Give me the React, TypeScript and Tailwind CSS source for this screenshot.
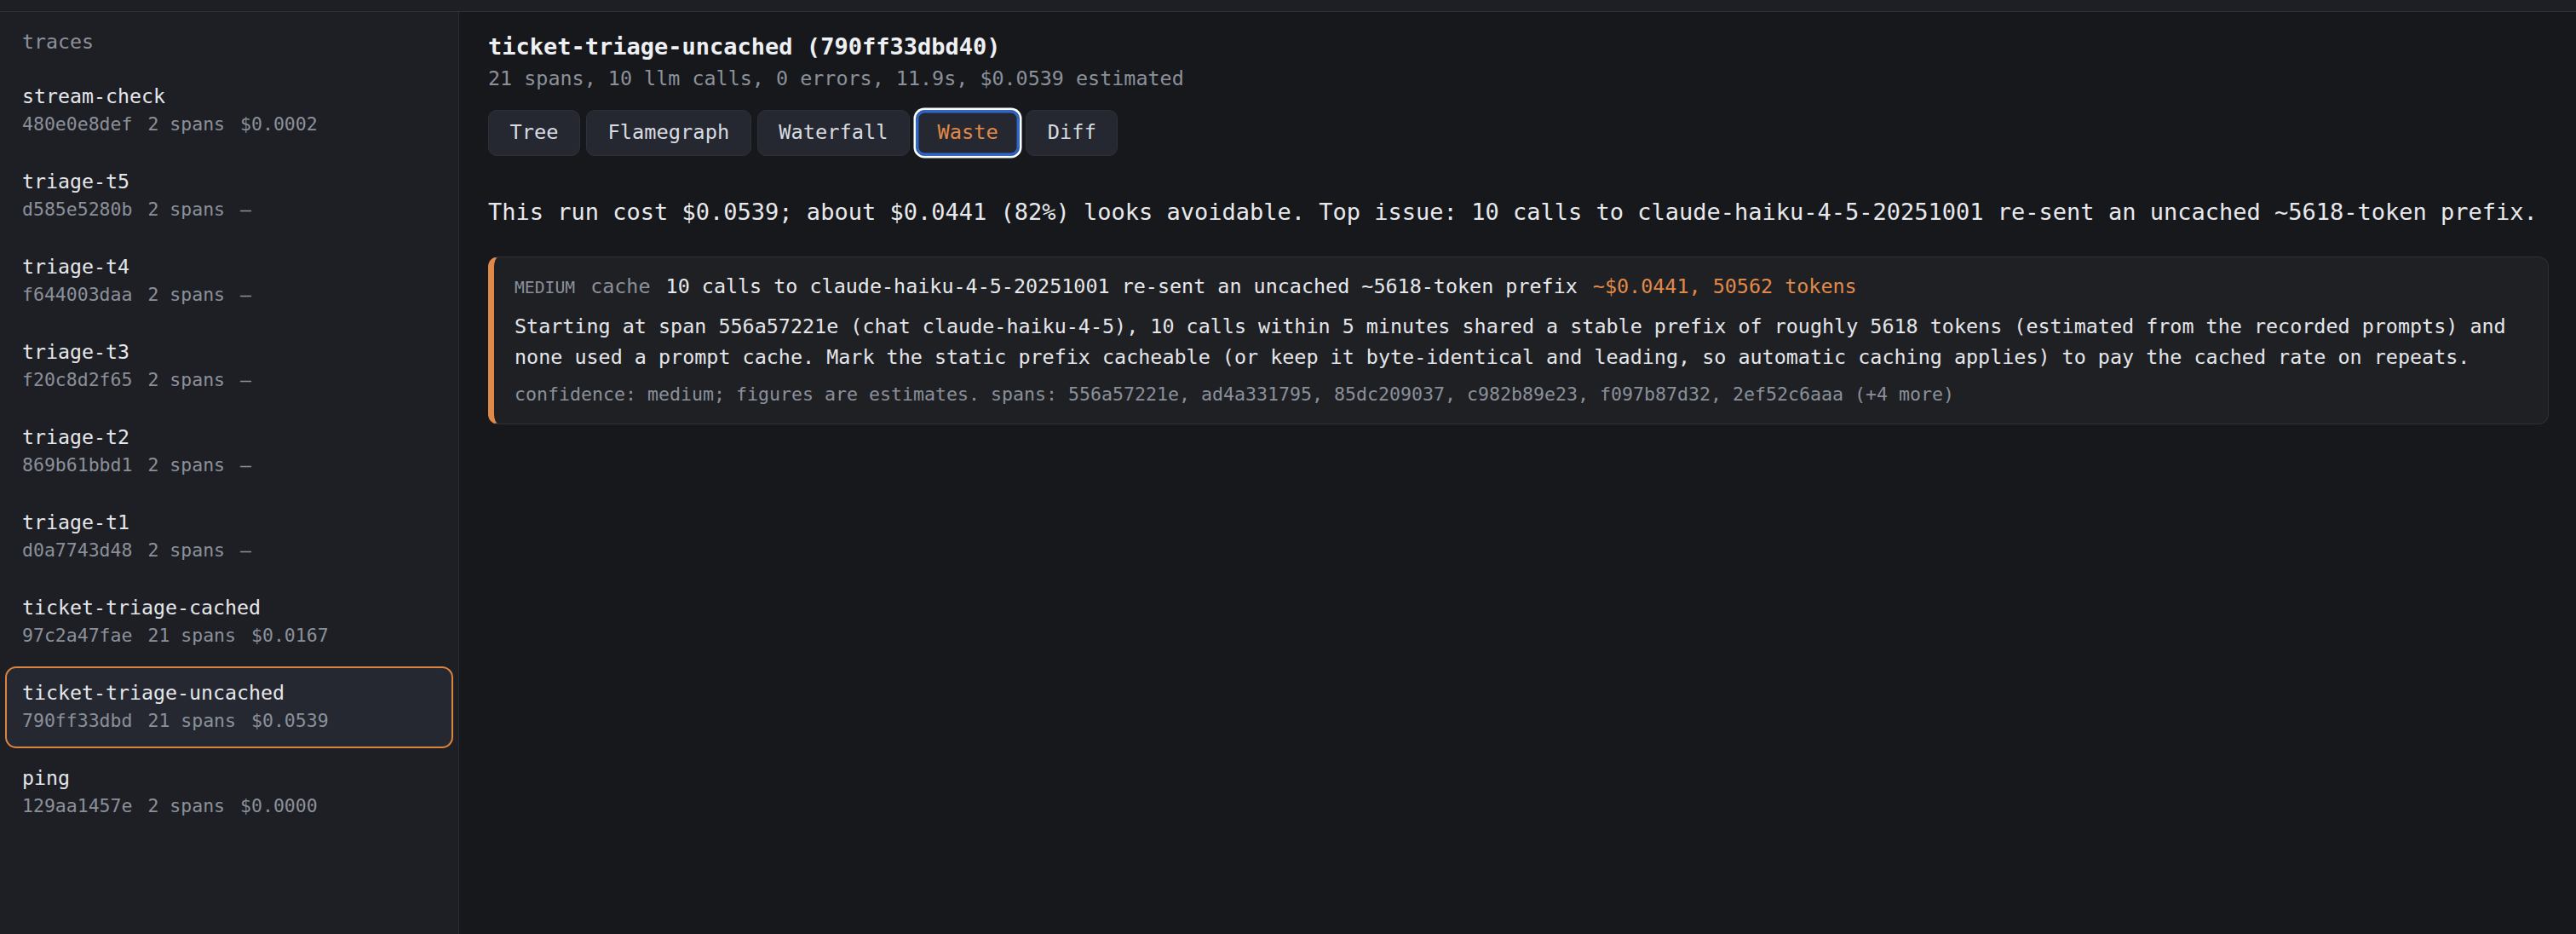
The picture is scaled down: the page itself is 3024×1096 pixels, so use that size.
import React from "react";

const traces = [
  { name: "stream-check", id: "480e0e8def", spans: "2 spans", cost: "$0.0002" },
  { name: "triage-t5", id: "d585e5280b", spans: "2 spans", cost: "–" },
  { name: "triage-t4", id: "f644003daa", spans: "2 spans", cost: "–" },
  { name: "triage-t3", id: "f20c8d2f65", spans: "2 spans", cost: "–" },
  { name: "triage-t2", id: "869b61bbd1", spans: "2 spans", cost: "–" },
  { name: "triage-t1", id: "d0a7743d48", spans: "2 spans", cost: "–" },
  { name: "ticket-triage-cached", id: "97c2a47fae", spans: "21 spans", cost: "$0.0167" },
  { name: "ticket-triage-uncached", id: "790ff33dbd", spans: "21 spans", cost: "$0.0539", active: true },
  { name: "ping", id: "129aa1457e", spans: "2 spans", cost: "$0.0000" },
];

const tabs = ["Tree", "Flamegraph", "Waterfall", "Waste", "Diff"];

export default function App() {
  return (
    <div className="h-[1096px] flex flex-col bg-[#17181c] font-['DejaVu_Sans_Mono',monospace] text-[#e4e6ea] overflow-hidden">
      {/* top strip */}
      <div className="h-[14px] shrink-0 bg-[#1e1f24] border-b border-[#2d2f35]" />

      <div className="flex flex-1 min-h-0">
        {/* Sidebar */}
        <aside className="w-[539px] shrink-0 bg-[#1e1f24] border-r border-[#2a2c31] px-[6px] pt-[19px]">
          <div className="pl-[20px] text-[23.25px] leading-[32px] text-[#8b919b]">traces</div>
          <div className="mt-[17px] flex flex-col gap-[4px]">
            {traces.map((t) => (
              <div
                key={t.id}
                className={`rounded-[13px] border-2 px-[18px] pt-[12px] pb-[14px] ${
                  t.active ? "bg-[#252830] border-[#d9843f]" : "border-transparent"
                }`}
              >
                <div className="text-[23.25px] leading-[34px] text-[#e4e6ea] whitespace-nowrap">{t.name}</div>
                <div className="flex gap-[18px] text-[21.5px] leading-[32px] text-[#8a909a] whitespace-nowrap">
                  <span>{t.id}</span>
                  <span>{t.spans}</span>
                  <span>{t.cost}</span>
                </div>
              </div>
            ))}
          </div>
        </aside>

        {/* Main */}
        <main className="flex-1 min-w-0 pl-[34px] pr-[32px] pt-[21px]">
          <h1 className="text-[27px] leading-[40px] font-bold text-[#eef0f3] whitespace-nowrap">
            ticket-triage-uncached (790ff33dbd40)
          </h1>
          <div className="text-[23.4px] leading-[34px] text-[#8b919b] whitespace-nowrap">
            21 spans, 10 llm calls, 0 errors, 11.9s, $0.0539 estimated
          </div>

          <div className="mt-[20px] flex gap-[7px]">
            {tabs.map((tab) => (
              <button
                key={tab}
                className={`h-[54px] px-[24.5px] rounded-[10px] border text-[23.7px] leading-none bg-[#252830] ${
                  tab === "Waste"
                    ? "border-[#2f66c9] text-[#e08a4a] shadow-[inset_0_0_0_2.5px_#2f66c9,0_0_0_2.5px_#ffffff]"
                    : "border-[#2e3138] text-[#d8dbe0]"
                }`}
              >
                {tab}
              </button>
            ))}
          </div>

          <p className="mt-[46px] text-[27px] leading-[40px] text-[#e8e9ec] whitespace-nowrap">
            This run cost $0.0539; about $0.0441 (82%) looks avoidable. Top issue: 10 calls to claude-haiku-4-5-20251001 re-sent an uncached ~5618-token prefix.
          </p>

          {/* Finding card */}
          <div className="mt-[32px] rounded-[12px] border border-[#2e3036] border-l-[7px] border-l-[#e08a4a] bg-[#1f2024] pl-[24px] pr-[24px] pt-[18px] pb-[18px]">
            <div className="text-[23.4px] leading-[32px] whitespace-nowrap">
              <span className="text-[19.7px] text-[#8a909a] mr-[18px]">MEDIUM</span>
              <span className="text-[#8a909a] mr-[18px]">cache</span>
              <span className="text-[#e6e8eb] mr-[18px]">10 calls to claude-haiku-4-5-20251001 re-sent an uncached ~5618-token prefix</span>
              <span className="text-[#e08a4a]">~$0.0441, 50562 tokens</span>
            </div>
            <p className="mt-[11px] text-[23.4px] leading-[36px] text-[#e4e6ea]">
              Starting at span 556a57221e (chat claude-haiku-4-5), 10 calls within 5 minutes shared a stable prefix of roughly 5618 tokens (estimated from the recorded prompts) and none used a prompt cache. Mark the static prefix cacheable (or keep it byte-identical and leading, so automatic caching applies) to pay the cached rate on repeats.
            </p>
            <div className="mt-[10px] text-[21.6px] leading-[32px] text-[#8a909a] whitespace-nowrap">
              confidence: medium; figures are estimates. spans: 556a57221e, ad4a331795, 85dc209037, c982b89e23, f097b87d32, 2ef52c6aaa (+4 more)
            </div>
          </div>
        </main>
      </div>
    </div>
  );
}
